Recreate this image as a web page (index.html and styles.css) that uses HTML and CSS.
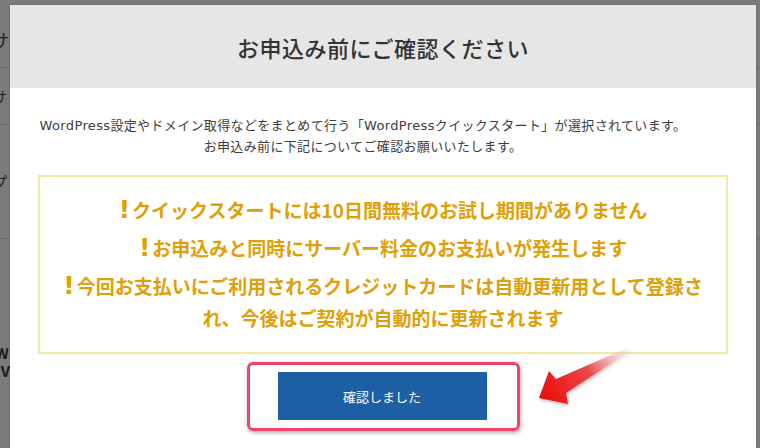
FILE: index.html
```html
<!DOCTYPE html>
<html lang="ja">
<head>
    <meta charset="UTF-8">
    <meta name="viewport" content="width=device-width, initial-scale=1.0">
    <title>お申込み前にご確認ください</title>
    <link rel="stylesheet" href="styles.css">
</head>
<body>
    <div class="page">
        <div class="row row-1"><span class="cut big">サ</span></div>
        <div class="row row-2"><span class="cut">サ</span></div>
        <div class="row row-3"><span class="cut">プ</span></div>
        <div class="row row-4">
            <span class="cut strong">W</span>
            <span class="cut strong">(V</span>
        </div>
    </div>

    <div class="modal">
        <div class="modal-head">
            <h2>お申込み前にご確認ください</h2>
        </div>
        <div class="modal-body">
            <p class="intro">WordPress設定やドメイン取得などをまとめて行う「WordPressクイックスタート」が選択されています。<br>お申込み前に下記についてご確認お願いいたします。</p>
            <div class="notice">
                <p><span class="mark">!</span>クイックスタートには10日間無料のお試し期間がありません</p>
                <p><span class="mark">!</span>お申込みと同時にサーバー料金のお支払いが発生します</p>
                <p><span class="mark">!</span>今回お支払いにご利用されるクレジットカードは自動更新用として登録され、今後はご契約が自動的に更新されます</p>
            </div>
            <div class="actions">
                <div class="highlight">
                    <button class="confirm">確認しました</button>
                </div>
            </div>
        </div>
    </div>

    <!-- annotation arrow -->
    <svg class="arrow" width="760" height="448" viewBox="0 0 760 448">
        <defs>
            <linearGradient id="arrowFill" x1="628" y1="350" x2="540" y2="398" gradientUnits="userSpaceOnUse">
                <stop offset="0" stop-color="#f6c8c8" stop-opacity="0.2"/>
                <stop offset="0.45" stop-color="#e84848"/>
                <stop offset="1" stop-color="#ee0a0a"/>
            </linearGradient>
            <filter id="arrowShadow" x="-20%" y="-20%" width="140%" height="140%">
                <feDropShadow dx="1" dy="2" stdDeviation="1.5" flood-color="#000" flood-opacity="0.25"/>
            </filter>
        </defs>
        <polygon points="539,398 549,371 556,379 627,348 629,352 566,393 568,404"
                 fill="url(#arrowFill)" filter="url(#arrowShadow)"/>
    </svg>
</body>
</html>
```

FILE: styles.css
```css
body {
    margin: 0;
    width: 760px;
    height: 448px;
    overflow: hidden;
    position: relative;
    background: #7b7b7b;
    font-family: "Noto Sans CJK JP", "Noto Sans", sans-serif;
    color: #333;
}

/* page behind the overlay */
.page {
    display: flex;
    flex-direction: column;
}
.row {
    border-bottom: 1px solid #6b6b6b;
    display: flex;
    flex-direction: column;
    justify-content: center;
    box-sizing: border-box;
}
.row-1 { height: 68px; padding-top: 12px; }
.row-2 { height: 57px; }
.row-3 { height: 114px; }
.row-4 { height: 209px; border-bottom: none; padding-top: 105px; justify-content: flex-start; }
.cut {
    margin-left: -7px;
    font-size: 14px;
    line-height: 17px;
    color: #1c1c1c;
}
.cut.big {
    font-size: 17px;
    margin-left: -8px;
}
.cut.strong {
    font-weight: bold;
    margin-left: -5px;
    font-size: 15px;
    line-height: 18px;
}

/* modal */
.modal {
    position: absolute;
    left: 10px;
    top: 5px;
    width: 746px;
    height: 460px;
    background: #fff;
    box-shadow: 0 0 0 1px rgba(0, 0, 0, 0.08);
}
.modal-head {
    height: 83px;
    background: #e6e6e6;
    display: flex;
    align-items: center;
    justify-content: center;
}
.modal-head h2 {
    margin: 0;
    font-size: 22px;
    font-weight: 500;
    letter-spacing: 0.5px;
    color: #333;
}
.modal-body {
    padding: 27px 28px 0;
}
.intro {
    margin: 0 32px 18px -8px;
    font-family: "DejaVu Sans", "Noto Sans CJK JP", sans-serif;
    font-size: 13px;
    line-height: 21px;
    letter-spacing: 0.35px;
    text-align: center;
    white-space: nowrap;
    color: #3d3d3d;
}
.notice {
    border: 2px solid #eee9a6;
    padding: 17px 18px 18px;
    text-align: center;
}
.notice p {
    margin: 0 0 6px;
    font-size: 19px;
    line-height: 32px;
    font-weight: bold;
    color: #dea006;
}
.notice p:last-child {
    margin-bottom: 0;
}
.mark {
    font-family: "DejaVu Sans", sans-serif;
    font-size: 25px;
    font-weight: bold;
    line-height: 1;
    margin-right: 2px;
    color: #dfa000;
}
.actions {
    display: flex;
    justify-content: center;
    margin-top: 8px;
}
.highlight {
    border: 3px solid #f2406c;
    border-radius: 6px;
    padding: 7px 30px 8px 28px;
    box-shadow: 1px 2px 4px rgba(0, 0, 0, 0.3);
}
.confirm {
    display: block;
    width: 209px;
    height: 48px;
    border: none;
    background: #1c5fa4;
    color: #fff;
    font-family: inherit;
    font-size: 13px;
}

.arrow {
    position: absolute;
    left: 0;
    top: 0;
}
```
